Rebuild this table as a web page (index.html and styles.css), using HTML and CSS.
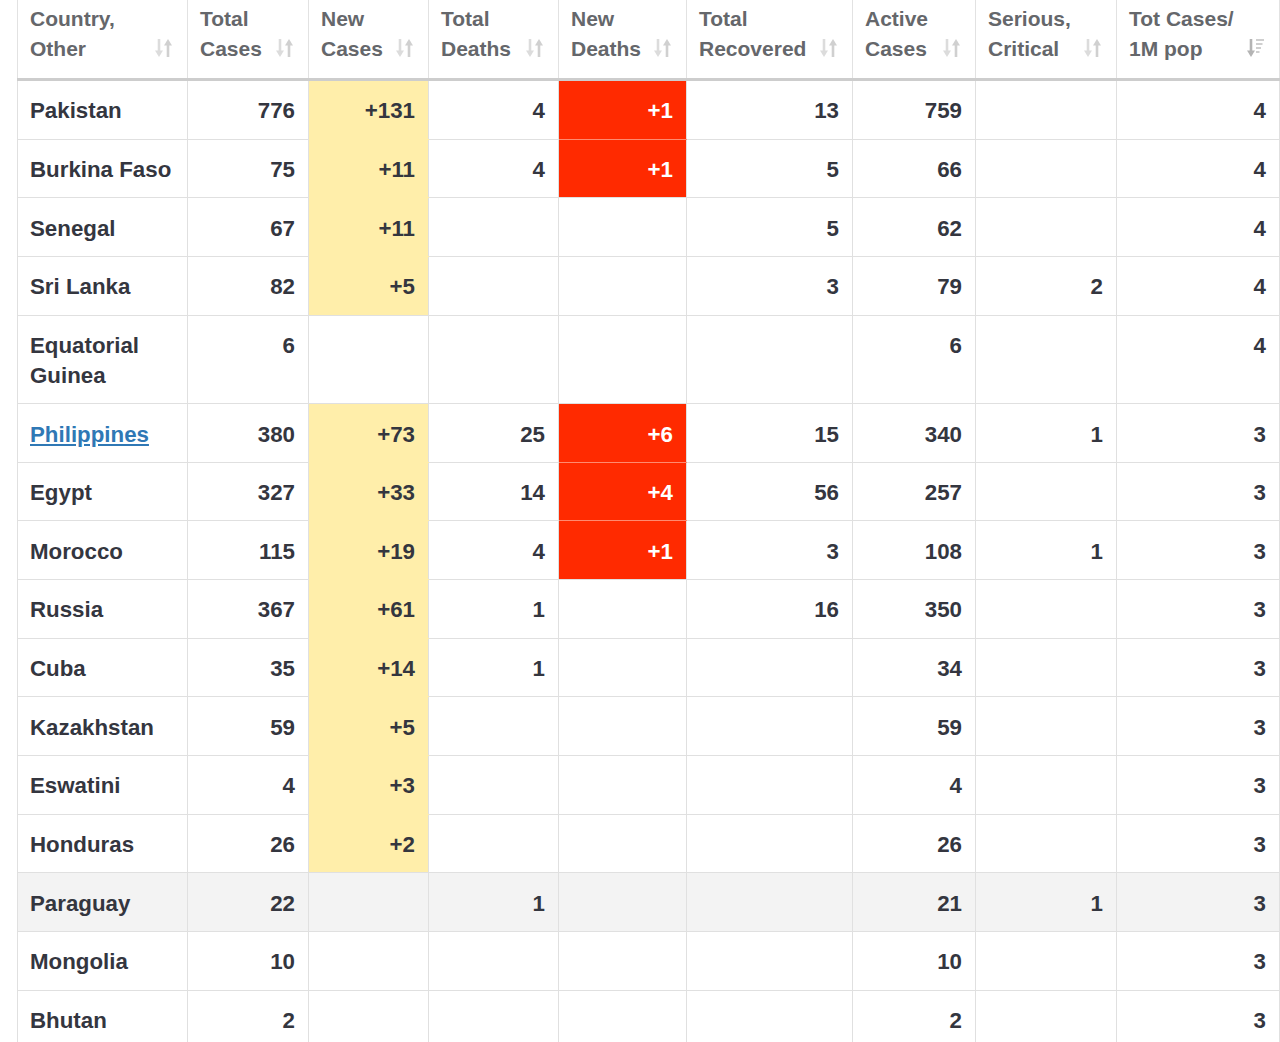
FILE: index.html
```html
<!DOCTYPE html>
<html>
<head>
<meta charset="utf-8">
<link rel="stylesheet" href="styles.css">
</head>
<body>
<table class="stats">
  <colgroup>
    <col class="c1"><col class="c2"><col class="c3"><col class="c4"><col class="c5"><col class="c6"><col class="c7"><col class="c8"><col class="c9">
  </colgroup>
  <thead>
    <tr>
      <th><div class="hd"><span>Country,<br>Other</span><svg class="sort" viewBox="0 0 18 20" width="18" height="20"><path d="M4 1v13" stroke="#dcdcdc" stroke-width="2.6" fill="none"/><path d="M0 12.5h8L4 19z" fill="#dcdcdc"/><path d="M13 19V6" stroke="#d0d0d0" stroke-width="2.6" fill="none"/><path d="M9 7.5h8L13 1z" fill="#d0d0d0"/></svg></div></th>
      <th><div class="hd"><span>Total<br>Cases</span><svg class="sort" viewBox="0 0 18 20" width="18" height="20"><path d="M4 1v13" stroke="#dcdcdc" stroke-width="2.6" fill="none"/><path d="M0 12.5h8L4 19z" fill="#dcdcdc"/><path d="M13 19V6" stroke="#d0d0d0" stroke-width="2.6" fill="none"/><path d="M9 7.5h8L13 1z" fill="#d0d0d0"/></svg></div></th>
      <th><div class="hd"><span>New<br>Cases</span><svg class="sort" viewBox="0 0 18 20" width="18" height="20"><path d="M4 1v13" stroke="#dcdcdc" stroke-width="2.6" fill="none"/><path d="M0 12.5h8L4 19z" fill="#dcdcdc"/><path d="M13 19V6" stroke="#d0d0d0" stroke-width="2.6" fill="none"/><path d="M9 7.5h8L13 1z" fill="#d0d0d0"/></svg></div></th>
      <th><div class="hd"><span>Total<br>Deaths</span><svg class="sort" viewBox="0 0 18 20" width="18" height="20"><path d="M4 1v13" stroke="#dcdcdc" stroke-width="2.6" fill="none"/><path d="M0 12.5h8L4 19z" fill="#dcdcdc"/><path d="M13 19V6" stroke="#d0d0d0" stroke-width="2.6" fill="none"/><path d="M9 7.5h8L13 1z" fill="#d0d0d0"/></svg></div></th>
      <th><div class="hd"><span>New<br>Deaths</span><svg class="sort" viewBox="0 0 18 20" width="18" height="20"><path d="M4 1v13" stroke="#dcdcdc" stroke-width="2.6" fill="none"/><path d="M0 12.5h8L4 19z" fill="#dcdcdc"/><path d="M13 19V6" stroke="#d0d0d0" stroke-width="2.6" fill="none"/><path d="M9 7.5h8L13 1z" fill="#d0d0d0"/></svg></div></th>
      <th><div class="hd"><span>Total<br>Recovered</span><svg class="sort" viewBox="0 0 18 20" width="18" height="20"><path d="M4 1v13" stroke="#dcdcdc" stroke-width="2.6" fill="none"/><path d="M0 12.5h8L4 19z" fill="#dcdcdc"/><path d="M13 19V6" stroke="#d0d0d0" stroke-width="2.6" fill="none"/><path d="M9 7.5h8L13 1z" fill="#d0d0d0"/></svg></div></th>
      <th><div class="hd"><span>Active<br>Cases</span><svg class="sort" viewBox="0 0 18 20" width="18" height="20"><path d="M4 1v13" stroke="#dcdcdc" stroke-width="2.6" fill="none"/><path d="M0 12.5h8L4 19z" fill="#dcdcdc"/><path d="M13 19V6" stroke="#d0d0d0" stroke-width="2.6" fill="none"/><path d="M9 7.5h8L13 1z" fill="#d0d0d0"/></svg></div></th>
      <th><div class="hd"><span>Serious,<br>Critical</span><svg class="sort" viewBox="0 0 18 20" width="18" height="20"><path d="M4 1v13" stroke="#dcdcdc" stroke-width="2.6" fill="none"/><path d="M0 12.5h8L4 19z" fill="#dcdcdc"/><path d="M13 19V6" stroke="#d0d0d0" stroke-width="2.6" fill="none"/><path d="M9 7.5h8L13 1z" fill="#d0d0d0"/></svg></div></th>
      <th><div class="hd"><span>Tot&nbsp;Cases/<br>1M pop</span><svg class="sort" viewBox="0 0 18 20" width="18" height="20"><path d="M4 1v13" stroke="#b4b4b4" stroke-width="2.6" fill="none"/><path d="M0 12.5h8L4 19z" fill="#b4b4b4"/><path d="M9 2h8M9 6h6.5M9 10h5M9 14h3.5" stroke="#cfcfcf" stroke-width="2.2" fill="none"/></svg></div></th>
    </tr>
  </thead>
  <tbody>
    <tr><td>Pakistan</td><td>776</td><td class="y">+131</td><td>4</td><td class="r">+1</td><td>13</td><td>759</td><td></td><td>4</td></tr>
    <tr><td>Burkina Faso</td><td>75</td><td class="y">+11</td><td>4</td><td class="r rl">+1</td><td>5</td><td>66</td><td></td><td>4</td></tr>
    <tr><td>Senegal</td><td>67</td><td class="y">+11</td><td></td><td></td><td>5</td><td>62</td><td></td><td>4</td></tr>
    <tr><td>Sri Lanka</td><td>82</td><td class="y yl">+5</td><td></td><td></td><td>3</td><td>79</td><td>2</td><td>4</td></tr>
    <tr><td>Equatorial Guinea</td><td>6</td><td></td><td></td><td></td><td></td><td>6</td><td></td><td>4</td></tr>
    <tr><td><a href="#" class="country">Philippines</a></td><td>380</td><td class="y">+73</td><td>25</td><td class="r">+6</td><td>15</td><td>340</td><td>1</td><td>3</td></tr>
    <tr><td>Egypt</td><td>327</td><td class="y">+33</td><td>14</td><td class="r">+4</td><td>56</td><td>257</td><td></td><td>3</td></tr>
    <tr><td>Morocco</td><td>115</td><td class="y">+19</td><td>4</td><td class="r rl">+1</td><td>3</td><td>108</td><td>1</td><td>3</td></tr>
    <tr><td>Russia</td><td>367</td><td class="y">+61</td><td>1</td><td></td><td>16</td><td>350</td><td></td><td>3</td></tr>
    <tr><td>Cuba</td><td>35</td><td class="y">+14</td><td>1</td><td></td><td></td><td>34</td><td></td><td>3</td></tr>
    <tr><td>Kazakhstan</td><td>59</td><td class="y">+5</td><td></td><td></td><td></td><td>59</td><td></td><td>3</td></tr>
    <tr><td>Eswatini</td><td>4</td><td class="y">+3</td><td></td><td></td><td></td><td>4</td><td></td><td>3</td></tr>
    <tr><td>Honduras</td><td>26</td><td class="y yl">+2</td><td></td><td></td><td></td><td>26</td><td></td><td>3</td></tr>
    <tr class="hl"><td>Paraguay</td><td>22</td><td></td><td>1</td><td></td><td></td><td>21</td><td>1</td><td>3</td></tr>
    <tr><td>Mongolia</td><td>10</td><td></td><td></td><td></td><td></td><td>10</td><td></td><td>3</td></tr>
    <tr><td>Bhutan</td><td>2</td><td></td><td></td><td></td><td></td><td>2</td><td></td><td>3</td></tr>
  </tbody>
</table>
</body>
</html>
```

FILE: styles.css
```css
html, body {
  margin: 0;
  padding: 0;
  background: #ffffff;
}

body {
  font-family: "Liberation Sans", Arial, Helvetica, sans-serif;
  overflow: hidden;
}

.stats {
  margin-left: 17px;
  border-collapse: collapse;
  table-layout: fixed;
  width: 1262px;
  font-weight: bold;
}

.c1 { width: 170px; }
.c2 { width: 121px; }
.c3 { width: 120px; }
.c4 { width: 130px; }
.c5 { width: 128px; }
.c6 { width: 166px; }
.c7 { width: 123px; }
.c8 { width: 141px; }
.c9 { width: 163px; }

.stats th {
  border-left: 1px solid #e2e2e2;
  border-right: 1px solid #e2e2e2;
  border-bottom: 3px solid #cdcdcd;
  padding: 4px 14px 14px 12px;
  font-size: 21px;
  line-height: 30px;
  color: #65676b;
  text-align: left;
  vertical-align: top;
}

.hd {
  display: flex;
  justify-content: space-between;
  align-items: flex-end;
}

.sort {
  flex: none;
  margin-bottom: 6px;
}

.stats td {
  border: 1px solid #e0e0e0;
  padding: 15.3px 13px 12.35px 12px;
  font-size: 22.3px;
  line-height: 30px;
  color: #34363f;
  text-align: right;
  vertical-align: top;
}

.stats td:first-child {
  text-align: left;
}

.stats td.y {
  background: #ffeeaa;
  border-bottom-color: #ffeeaa;
}

.stats td.y.yl {
  border-bottom-color: #e0e0e0;
}

.stats td.r {
  background: #ff2a00;
  color: #ffffff;
  border-bottom-color: #ff8a70;
}

.stats td.r.rl {
  border-bottom-color: #e0e0e0;
}

.stats tr.hl td {
  background: #f3f3f3;
}

.country {
  color: #2f78b5;
  text-decoration: underline;
}
```
